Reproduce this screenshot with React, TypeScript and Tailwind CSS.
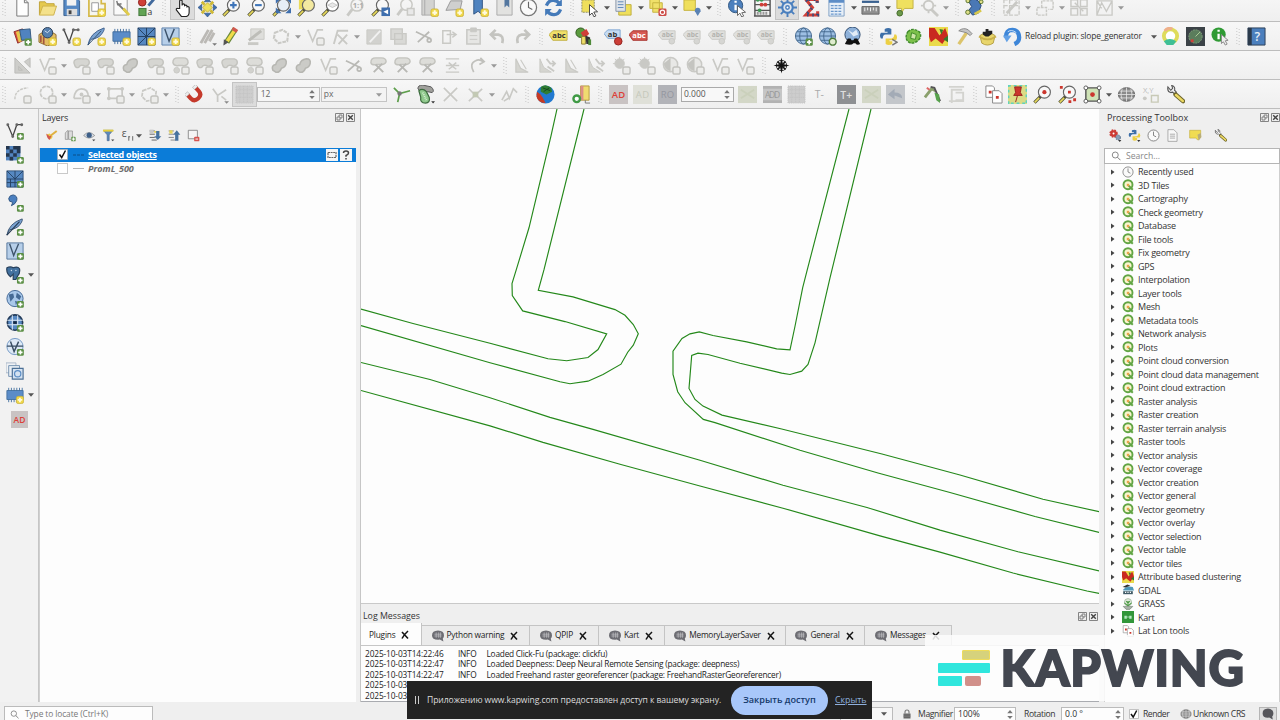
import React from "react";

/* ---------- shared marks ---------- */
const Star = () => (
  <g>
    <rect x="11.5" y="11.5" width="8" height="8" rx="2" fill="#f0d84a" stroke="#c9ae35" strokeWidth=".8" />
    <path d="M15.5 13v5M13 15.5h5" stroke="#fffbe0" strokeWidth="2" />
  </g>
);
const Plus = () => (
  <g>
    <rect x="12.2" y="12.2" width="7.6" height="7.6" rx="1.5" fill="#5b8f45" />
    <path d="M16 13.6v4.8M13.6 16h4.8" stroke="#fff" strokeWidth="1.8" />
  </g>
);
const GBadge = () => <rect x="11.5" y="11.5" width="7.5" height="7.5" rx="2" fill="#ececea" stroke="#c2c2be" strokeWidth="1.5" />;
const Lens = ({ fill = "#f8f8f8" }: { fill?: string }) => (
  <g>
    <path d="M8 12L1.5 18.5" stroke="#4b4b33" strokeWidth="3.4" />
    <path d="M6.5 13.500L1.800 18.200" stroke="#e6d85c" strokeWidth="1.8" />
    <circle cx="12" cy="7.500" r="6.300" fill={fill} stroke="#666" strokeWidth="1.200" />
  </g>
);
const GlobeBase = ({ fill = "#9dbfe3", line = "#46698f" }: { fill?: string; line?: string }) => (
  <g fill="none" stroke={line} strokeWidth="1">
    <circle cx="10" cy="9.500" r="8.500" fill={fill} />
    <ellipse cx="10" cy="9.500" rx="4" ry="8.500" />
    <path d="M1.500 9.500h17M3 5h14M3 14h14" />
  </g>
);
const G = "#c9c9c5";

const art: Record<string, React.ReactNode> = {
  file: <path d="M4 1h8l4 4v14H4zM12 1v4h4" fill="#fefefe" stroke="#777" strokeWidth="1" />,
  folder: <><path d="M1.500 18V4h6l1.500 2h8v3" fill="#e5c94f" stroke="#c0a238" /><path d="M1.500 18L5 8.500h14.500L16.500 18z" fill="#f4e18b" stroke="#cdb14a" /></>,
  save: <><path d="M2 1.500h15l1.500 1.500v15.500H2z" fill="#5689c4" stroke="#39608f" /><path d="M5 2h10v6H5z" fill="#f3f3f3" /><path d="M5 11.500h11v7H5z" fill="#ddd" /><path d="M7 13h3v4H7z" fill="#444" /></>,
  layout: <><path d="M2 1h13v5h4v8h-5v5H2z" fill="#f6f6ef" stroke="#d5b94a" strokeWidth="1.800" /><path d="M5 5h7v9H5z" fill="#fff" stroke="#999" /><Star /></>,
  manager: <><path d="M2 1h14v17H2z" fill="#fafafa" stroke="#999" /><path d="M6 6l10 10" stroke="#777" strokeWidth="2" /><path d="M12 11l6 7" stroke="#e0cb4b" strokeWidth="3" /><path d="M5 3l1 4 4-1" fill="none" stroke="#777" strokeWidth="1.500" /></>,
  style: <><circle cx="5.500" cy="4.500" r="4" fill="#cf3f38" stroke="#8d241f" /><path d="M12 8L18 1" stroke="#41699c" strokeWidth="3" /><rect x="2" y="11" width="7.500" height="7.500" fill="#62a455" stroke="#42783b" /><text x="11" y="17.500" fontSize="9" fontFamily="Open Sans" fill="#333">a</text></>,
  hand: <path d="M7 11V3q1.300-2 2.600 0v5 -1q1.500-1.500 2.600 0v1q1.500-1 2.500.3v1q1.500-.8 2.300.5v5q0 4-3 4.700H9Q7 17 3.500 12.500q-.3-2 1.500-1.500z" fill="#fff" stroke="#222" strokeWidth="1.200" />,
  pan: <><path d="M10 5l5 5-5 5-5-5z" fill="#efe05a" stroke="#c6b43d" /><path d="M10 0l3.500 4h-7zM10 20l3.500-4h-7zM0 10l4-3.500v7zM20 10l-4-3.500v7z" fill="#3f6fae" stroke="#2b4b78" strokeWidth=".6" /><path d="M4 4l3 3M16 4l-3 3M4 16l3-3M16 16l-3-3" stroke="#cfb936" strokeWidth="3" /></>,
  zin: <><Lens /><path d="M12 4v7M8.500 7.500h7" stroke="#3e74b8" strokeWidth="2.200" /></>,
  zout: <><Lens /><path d="M8.500 7.500h7" stroke="#3e74b8" strokeWidth="2.200" /></>,
  zfull: <><Lens fill="#e6eef7" /><path d="M4 0h6L4 6zM20 0h-6l6 6zM20 16h-6l6-6zM10 16L4 10v6z" fill="#3f6fae" /></>,
  zsel: <><path d="M2 1h9v11H2z" fill="#eadb5c" /><Lens fill="#f3e9a0" /></>,
  zlayer: <><Lens fill="#fff" /><path d="M7 7.500L12 5l5 2.500-5 2.500z" fill="#e8e8e8" stroke="#aaa" strokeWidth=".6" /></>,
  zlast: <><Lens /><path d="M11 10h9v9h-9z" fill="#3f6fae" /><path d="M18 12l-5 2.500 5 2.500z" fill="#fff" /></>,
  znext: <g stroke={G} fill="none" strokeWidth="1.600"><circle cx="11" cy="7" r="6" /><path d="M6.500 11.500L1.500 18" strokeWidth="3" /><path d="M12 11h7v7h-7z" fill="#e8e8e8" /></g>,
  z11: <g><g stroke={G} fill="none" strokeWidth="1.600"><circle cx="11.500" cy="7.500" r="6.300" /><path d="M6.500 12L1.500 18.500" strokeWidth="3" /></g><text x="7" y="10.500" fontSize="8" fontWeight="700" fontFamily="Open Sans" fill="#aaa">1:1</text></g>,
  newmap: <><path d="M2 1h13v17H2z" fill="#d3d3d1" stroke="#aaa" /><path d="M5 1v17" stroke="#aaa" /><Star /></>,
  new3d: <><path d="M1 13L6 3h12l-2 9z" fill="#cfcfcf" stroke="#999" /><Star /></>,
  bookmark: <><path d="M4 0h9v18L8.500 14 4 17z" fill="#4f83bf" stroke="#2f5484" /><Star /></>,
  bookmarks: <><path d="M2 1h16v17H2z" fill="#e2e2e0" stroke="#aaa" /><path d="M10 0h5v10l-2.500-2.500L10 10z" fill="#54779f" /></>,
  clock: <><circle cx="10" cy="10" r="8.500" fill="#fafafa" stroke="#777" strokeWidth="1.300" /><path d="M10 4v6l4 2" fill="none" stroke="#666" strokeWidth="1.200" /></>,
  refresh: <g fill="none" stroke="#447ab9" strokeWidth="3.400"><path d="M2.500 8Q5 2 10 2.500q4 .3 6 3" /><path d="M17.500 12Q15 18 10 17.500q-4-.3-6-3" /><path d="M18.800 1v7.500h-7zM1.200 19v-7.500h7z" fill="#447ab9" stroke="none" /></g>,
  select: <><path d="M2 2h13v13H2z" fill="#efdf5c" stroke="#8e8e6a" strokeDasharray="2 1" /><path d="M10 7l8.500 7.500-4 .3 2.200 4-2 1-2-4-2.700 2.500z" fill="#fff" stroke="#333" strokeWidth=".9" /></>,
  selval: <><path d="M5 7h13v11H5z" fill="#efdf5c" stroke="#bfae3d" /><path d="M2 1h10v13H2z" fill="#dfe4ea" stroke="#8795a5" /><path d="M4 4h6M4 7h6M4 10h6" stroke="#5f87b7" /></>,
  desel: <><path d="M2 1h10v10H2z M5 5h10v10H5z" fill="#f0e069" stroke="#c5b33f" /><rect x="11" y="11" width="8.500" height="8" rx="1.500" fill="#cc4b46" /><circle cx="15.200" cy="15" r="2.300" fill="none" stroke="#fff" strokeWidth="1.200" /></>,
  selloc: <><path d="M1 2h12v11H1z" fill="#efdf5c" stroke="#c5b33f" /><path d="M15.500 19l-3-5q-.3-3.500 3-3.700 3.300.2 3 3.700z" fill="#5a82b4" /></>,
  identify: <><circle cx="8" cy="8" r="7.500" fill="#4d80bd" stroke="#315781" /><path d="M8 3v2M8 7v6" stroke="#fff" strokeWidth="2.400" /><path d="M10 8l8.500 7-4 .5 2 3.500-2 1-2-4-2.500 2.500z" fill="#fff" stroke="#555" strokeWidth=".9" /></>,
  abacus: <><path d="M2 1v18M18 1v18M1 19h18M2 7h16M2 13h16M2 2h16" stroke="#555" strokeWidth="1.500" /><path d="M5 2h0M9 2h0M7 13h0" stroke="#3f9a55" strokeWidth="4" strokeLinecap="round" /><path d="M13 7h0M9 7h0" stroke="#cf3f38" strokeWidth="4" strokeLinecap="round" /><path d="M4 16h12" stroke="#999" strokeWidth="3" strokeDasharray="2 1" /></>,
  gear: <g stroke="#4a7fbe" fill="none"><path d="M10 0v20M0 10h20M3 3l14 14M17 3L3 17" strokeWidth="2" /><circle cx="10" cy="10" r="5.500" strokeWidth="2.200" fill="#dfe6ee" /><circle cx="10" cy="10" r="1.800" strokeWidth="1.500" fill="#fff" /></g>,
  sigma: <><path d="M16 5V1.500H4l7 8.500-7 8h12.500V14" fill="none" stroke="#cf3f38" strokeWidth="3.200" /><path d="M16 5V1.500H4l7 8.500-7 8h12.500V14" fill="none" stroke="#2f4d80" strokeWidth="3.200" strokeDasharray="1.500 4" /></>,
  table: <><path d="M2 1h16v18H2z" fill="#e7eff8" stroke="#7f9fc4" /><path d="M2 1h16v4H2z" fill="#5d8dc7" /><path d="M4 8h12M4 11h12M4 14h12M4 17h12" stroke="#6b98cc" strokeWidth="1.300" strokeDasharray="3 1" /></>,
  ruler: <><path d="M1 4h18" stroke="#39608f" strokeWidth="2.400" /><path d="M1 9h18v8H1z" fill="#8f8f8f" stroke="#666" /><path d="M4 10v4M7 10v3M10 10v4M13 10v3M16 10v4" stroke="#f4f4f4" /></>,
  tip: <><path d="M2 1h17v10h-9l-3 4v-4H2z" fill="#efe05f" stroke="#c2b144" /><circle cx="5" cy="16" r="3" fill="#6c9a4a" stroke="#476b30" /></>,
  gearg: <g stroke={G} fill="none"><circle cx="9" cy="8" r="5" strokeWidth="2" /><path d="M12 12l7 7" strokeWidth="3" /><path d="M9 0v16M1 8h16" strokeDasharray="3 10" strokeWidth="2" /></g>,
  nodes: <><path d="M4 4Q8-1 14 3l3 5-3 8-6 2-4-5 3-4z" fill="#4a78b5" stroke="#27487a" /><g fill="#dfe08a" stroke="#56702c"><circle cx="3" cy="3" r="2" /><circle cx="17" cy="4" r="2" /><circle cx="3" cy="15" r="2.300" /></g><path d="M10 17l7-4" stroke="#d8c84b" strokeWidth="2.500" /></>,
  gBox: <g stroke={G} fill="none" strokeWidth="1.400"><path d="M2 2h16v16H2zM2 8h16M8 2v16" strokeDasharray="4 1.500" /><path d="M5 16L16 4" strokeWidth="3" /></g>,
  gGrid: <g stroke={G} fill="none" strokeWidth="1.500"><path d="M1 10h10v8H1zM6 10V3h12v9h-5" strokeDasharray="3 1" /></g>,
  gHex: <g stroke={G} fill="none" strokeWidth="1.500"><path d="M1 2h7v7H1zM11 2h7v7h-7zM1 11h7v7H1zM11 11h7v7h-7z" /><path d="M5 5l9 9" /></g>,
  gTri: <g stroke={G} fill="none" strokeWidth="1.400"><path d="M2 3h16v15H2zM2 18L7 5l5 9 6-11M2 3l5 8" /></g>,
  /* row 2 */
  dsm: <><path d="M1 5l9-3 3 11-8 4z" fill="#d6473f" stroke="#90302a" /><path d="M3 5l10-2 2 10-9 3z" fill="#e6c64a" /><path d="M7 3l11-1 1 11-10 1z" fill="#5083bf" stroke="#34597f" /><Plus /></>,
  geopkg: <><path d="M1 8l9-5 9 5v8l-9 4-9-4z" fill="#e3bd63" stroke="#8e6f35" /><path d="M3 9v7M6 10v8" stroke="#a5563f" strokeWidth="1.800" /><circle cx="10" cy="6" r="5.500" fill="#557fae" stroke="#2b3e55" /><path d="M7 4l3 2 3-3" stroke="#d6e2ef" fill="none" /><Star /></>,
  vnew: <><path d="M2 3l5.500 13L12 3h5" fill="none" stroke="#444" strokeWidth="1.400" /><path d="M2 3h0M7.500 16h0M12 3h0M17 3h0" stroke="#666" strokeWidth="3.200" strokeLinecap="round" /><Star /></>,
  feather: <><path d="M1 19Q3 6 18 1q1 3-5 9-5 3-9 3z" fill="#7ba3d2" stroke="#3d5f8b" /><path d="M1 19L15 4" stroke="#34506f" /><Star /></>,
  featherp: <><path d="M1 19Q3 6 18 1q1 3-5 9-5 3-9 3z" fill="#7ba3d2" stroke="#34506f" /><path d="M1 19L15 4" stroke="#263a52" strokeWidth="1.300" /><Plus /></>,
  chip: <><path d="M1 5h18v10H1z" fill="#5b8cc8" stroke="#44709f" /><path d="M3 2v16M6 2v16M9 2v16M12 2v16M15 2v16M18 2v5" stroke="#44709f" strokeDasharray="3.500 9" /><Star /></>,
  mesh: <><path d="M1 1h18v18H1z" fill="#5688c2" stroke="#2f4f77" /><path d="M1 1l9 9 9-9M1 10h18M10 1v18M1 19l9-9" stroke="#243f60" fill="none" /><Star /></>,
  meshp: <><path d="M1 1h18v18H1z" fill="#5688c2" stroke="#2f4f77" /><path d="M1 1l9 9 9-9M1 10h18M10 1v18M1 14h18M5 10v9" stroke="#243f60" fill="none" /><Plus /></>,
  vtile: <><path d="M1 1h18v18H1z" fill="#b7cfe9" stroke="#5d81ab" /><path d="M4 2l4.500 13L14 2" fill="none" stroke="#3d536b" strokeWidth="1.500" /><Star /></>,
  vtilep: <><path d="M1 1h18v18H1z" fill="#b7cfe9" stroke="#4f7197" /><path d="M4 2l4.500 13L14 2" fill="none" stroke="#3d536b" strokeWidth="1.500" /><Plus /></>,
  gpencils: <><path d="M3 17L11 3M7 17l8-14M12 15l5-9" stroke="#bbb9b5" strokeWidth="3" /><path d="M15 17h5l-2.500 2.800z" fill="#777" /></>,
  pencil: <><path d="M5 16L14 2" stroke="#6a8a3b" strokeWidth="6" /><path d="M5.500 15L14 2.500" stroke="#f0dc4a" strokeWidth="3.500" /><path d="M12.500 4.500l2-3" stroke="#d0584e" strokeWidth="6" /><path d="M2 13l5 3-5.500 3.500z" fill="#555" /></>,
  gsave: <><path d="M4 2h14v11H4z" fill="#dededb" stroke={G} /><path d="M2 14L15 4" stroke="#bdbdb8" strokeWidth="3" /><path d="M1 16h11v3H1z" fill="#c9c9c5" /></>,
  gpoly: <path d="M3 6l8-3 6 4-1 8-9 2-5-5z" fill="none" stroke={G} strokeWidth="2.200" strokeDasharray="4 1" />,
  gv: <><path d="M2 3l5 12L12 3h6" fill="none" stroke={G} strokeWidth="1.700" /><GBadge /></>,
  gvx: <g stroke={G} fill="none" strokeWidth="2"><path d="M3 18L7 4h11M7 8l10 10M17 8L8 18" /></g>,
  gedit: <><path d="M2 3h15v15H2z" fill="#d2d2cf" stroke={G} /><path d="M5 16L16 4" stroke="#f1f1f1" strokeWidth="2" /></>,
  gcopy: <><path d="M2 2h12v11H2zM6 7h12v11H6z" fill="#d9d9d6" stroke={G} strokeWidth="1.400" /></>,
  gcut: <g stroke="#b9b9b5" fill="none" strokeWidth="1.800"><path d="M2 5l15 7M4 16L16 5" /><circle cx="16" cy="14" r="2" /></g>,
  gpaste: <g stroke={G} fill="none" strokeWidth="1.600"><path d="M4 4h8v13H4zM8 8h10M14 5l4 3-4 3" /></g>,
  gclip: <><path d="M3 3h14v15H3z" fill="#e6e6e4" stroke={G} strokeWidth="1.600" /><path d="M7 1h6v4H7zM6 9h8M6 13h8" stroke={G} fill={G} /></>,
  gundo: <path d="M3 8h8q6 1 4 9M8 3L3 8l5 5" fill="none" stroke="#c4c4c0" strokeWidth="2.800" />,
  gredo: <path d="M17 8H9q-6 1-4 9M12 3l5 5-5 5" fill="none" stroke="#c4c4c0" strokeWidth="2.800" />,
  abcY: <><path d="M0 8l4-4h15v10H4z" fill="#f0e069" stroke="#c2b144" /><text x="3.500" y="12" fontSize="8" fontWeight="700" fontFamily="Open Sans" fill="#333">abc</text></>,
  charts: <><circle cx="7" cy="6" r="5" fill="#5a9a3e" stroke="#30591f" /><path d="M7 6l6-4 3 5-5 5z" fill="#cf3f38" /><path d="M8 10h4v8H8z" fill="#f0e069" stroke="#8e7f35" /><path d="M12 9l5 2v7h-4z" fill="#333" /><path d="M15 13h3v6h-3z" fill="#4f8a3a" /></>,
  abcB: <><path d="M0 7l4-4h13v9H4z" fill="#c6dbf2" stroke="#7fa6d3" /><text x="4" y="11" fontSize="8" fontWeight="700" fontFamily="Open Sans" fill="#333">ab</text><circle cx="15" cy="15" r="4" fill="#cb3d36" stroke="#92241f" /></>,
  abcR: <><path d="M0 8l4-4h15v10H4z" fill="#d65a53" stroke="#a8332d" /><text x="3.500" y="12" fontSize="8" fontWeight="700" fontFamily="Open Sans" fill="#fff">abc</text></>,
  gabc: <><path d="M0 8l4-4h14v9H4z" fill="#e0e0dd" stroke={G} /><text x="4" y="11" fontSize="7" fontWeight="700" fontFamily="Open Sans" fill="#b2b2ae">abc</text><circle cx="14.500" cy="15" r="3" fill="#d6d6d3" stroke={G} /></>,
  globeadd: <><GlobeBase /><Plus /></>,
  globecog: <><GlobeBase /><circle cx="15.500" cy="15.500" r="3.600" fill="#dfeccf" stroke="#4b7a3a" strokeWidth="1.500" /></>,
  globebin: <><circle cx="10" cy="8" r="8" fill="#8fb2da" stroke="#2d4a6d" /><path d="M5 3l5 3 4-3 2 5-5 2z" fill="#e3ecf6" /><path d="M2 18l3-6h3l1 2h2l1-2h3l3 6q-3 2-5-1h-2q-2 3-9 1z" fill="#111" /></>,
  python: <><path d="M6 2q4-2 7 0v6H7q-3 0-3 4H2Q0 9 2 6h7V5H6z" fill="#3d6fa8" /><path d="M14 18q-4 2-7 0v-6h6q3 0 3-4h2q2 3 0 6h-7v1h3z" fill="#eccf44" /><path d="M14 13l5 3-5 3" fill="none" stroke="#777" strokeWidth="1.500" /></>,
  snake: <><path d="M4 5q5-5 12 0 3 4 0 8-6 6-11 3-5-4-1-11z" fill="#7cc04a" stroke="#3f8a2a" strokeWidth="1.500" strokeDasharray="3 1" /><path d="M8 6l5 2-1 5-5-1z" fill="#cfe6a8" stroke="#3f8a2a" /></>,
  cluster: <><path d="M0 0h20v20H0z" fill="#eadb4b" /><path d="M0 1h6l5 8 6-8 3 8-6 9-7-6-5 4-2-6z" fill="#c92a20" /><path d="M11 2l4 1-2 5zM15 13l5-4v7z" fill="#377a2a" /></>,
  hammer: <><path d="M5 18L14 5" stroke="#dcc46b" strokeWidth="3.500" /><path d="M5 4q5-4 10-1l4 4-2 2-4-3z" fill="#c4c4c4" stroke="#888" /></>,
  plugin: <><path d="M2 9q8-6 16 0l-2 8q-6 4-12 0z" fill="#e8d56b" stroke="#b49f45" /><path d="M1 10q9 6 18 0" fill="none" stroke="#c9b04a" strokeWidth="2" /><path d="M8 2h3v2h4v3l-4 3H8L5 8V5h3z" fill="#222" /></>,
  reload: <><path d="M3 11Q3 3 10 3q7 .5 7 8 0 5-5 7" fill="none" stroke="#3d86d8" strokeWidth="4.500" /><path d="M0 9h9l-5 7z" fill="#63a1e6" /><path d="M5 5q4-3 9 1" stroke="#cfe3f8" fill="none" /></>,
  donut: <><circle cx="10" cy="9.500" r="7" fill="#fff" stroke="#dedc5a" strokeWidth="4" /><path d="M4 4q3-4 8-2" stroke="#efb08a" strokeWidth="3" fill="none" /><path d="M3 15q6-5 13 0l-3 4H6z" fill="#3fbf95" /></>,
  radar: <><path d="M0 0h20v20H0z" fill="#3b4247" /><circle cx="10" cy="10" r="7" fill="#5b7d5c" stroke="#83a27e" strokeDasharray="2 1" /><path d="M10 10l5-5" stroke="#b0d09a" /><path d="M5 13h3v3H5z" fill="#cf3f38" /></>,
  info: <><circle cx="8" cy="8" r="7.500" fill="#2f9a34" /><path d="M8 3v2M8 7v6" stroke="#fff" strokeWidth="2.400" /><path d="M11 8l7 6-3 .5 2 3.500-2 1-2-3.500-2 2z" fill="#eee" stroke="#888" /></>,
  help: <><path d="M1 1h18v18H1z" fill="#4b7fbd" stroke="#2c3f56" /><path d="M1 1h4v18H1z" fill="#2b3a4c" /><text x="8" y="15" fontSize="13" fontFamily="Open Sans" fontWeight="600" fill="#e6eef7">?</text></>,
  /* row 3 */
  gsetsq: <path d="M2 2v16h16zM6 11v4h4zM18 2v10L12 6z" fill="#cdcdca" stroke="#bcbcb8" />,
  gpill: <><path d="M3 10q-3-6 3-7h9q4 1 3 5-2 4-6 2-4-1-5 2-3 1-4-2z" fill="#d6d6d2" stroke="#c3c3be" strokeWidth="1.500" /><GBadge /></>,
  gpill2: <><path d="M2 7q0-5 5-5h6q5 0 5 5-1 4-6 3H8q-5 1-6-3z" fill="#ddddd9" stroke="#c3c3be" strokeWidth="1.500" /><circle cx="6" cy="15" r="3" fill="#d2d2ce" stroke={G} /><GBadge /></>,
  gblob: <path d="M3 15q-2-5 3-6 1-5 7-6 5 0 4 5-1 4-5 5-2 5-6 4z" fill="#cbcbc7" stroke="#b6b6b1" strokeWidth="1.600" />,
  gscis: <><path d="M2 7q0-5 5-5h6q5 0 5 4-1 3-6 3H8q-5 1-6-2z" fill="#ddddd9" stroke="#c3c3be" strokeWidth="1.500" /><path d="M5 17L14 8M15 17L7 9" stroke="#b8b8b4" strokeWidth="2" /></>,
  gline: <g stroke={G} fill="none" strokeWidth="1.500"><path d="M3 3h14M3 17h14M6 7l4 3 4-3M6 14l4-3 4 3M3 10h14" /></g>,
  grot: <path d="M6 17Q1 8 8 5q4-2 8 1M13 2l4 4-5 3" fill="none" stroke="#c0c0bc" strokeWidth="1.800" />,
  gtriA: <path d="M3 17V3l5 10 8 4zM8 4l6 10" fill="#d5d5d0" stroke={G} strokeWidth="1.200" />,
  gtriB: <><path d="M2 17V3l4 9 8 5z" fill="#d5d5d0" stroke={G} /><path d="M9 3l4 5h5M15 5l3 3-3 3M10 11l7 5" stroke={G} strokeWidth="1.800" fill="none" /></>,
  gcirc: <><circle cx="8" cy="8" r="5" fill="#c9c9c5" stroke={G} /><path d="M8 1v3M1 8h3M3 3l2 2M13 3l-2 2" stroke={G} /><GBadge /></>,
  gpie: <><circle cx="9" cy="9" r="7.500" fill="#e8e8e6" stroke={G} strokeWidth="1.600" /><path d="M9 2v14q-7-2-7-8z" fill="#c4c4c0" /><GBadge /></>,
  compass: <g transform="translate(1.500 1.500) scale(.85)"><circle cx="10" cy="10" r="6.500" fill="none" stroke="#333" strokeWidth="1.200" /><path d="M10 0l1.800 8.200L20 10l-8.200 1.800L10 20l-1.800-8.200L0 10l8.200-1.800z" fill="#111" /><path d="M5 5l3 3M15 5l-3 3M5 15l3-3M15 15l-3-3" stroke="#111" strokeWidth="1.800" /></g>,
  /* row 4 */
  garc: <><path d="M2 15Q2 4 16 3" fill="none" stroke={G} strokeWidth="1.500" strokeDasharray="3 1" /><GBadge /></>,
  gcircle: <><circle cx="9" cy="8" r="6.500" fill="none" stroke={G} strokeWidth="1.800" strokeDasharray="4 1" /><GBadge /></>,
  gell: <><path d="M2 14Q3 4 10 4t7 8M2 14h8" fill="none" stroke={G} strokeWidth="1.800" /><circle cx="10" cy="10" r="2" fill={G} /><GBadge /></>,
  grect: <><path d="M3 4h14v10H3z" fill="none" stroke={G} strokeWidth="1.800" /><path d="M3 4h0M17 4h0M3 14h0" stroke={G} strokeWidth="4" strokeLinecap="round" /><GBadge /></>,
  gpolyb: <><path d="M3 6l8-3 6 4-1 8-9 2-5-5z" fill="none" stroke={G} strokeWidth="1.800" strokeDasharray="4 1" /><GBadge /></>,
  magnet: <g transform="translate(1.500 1.500) scale(.88) rotate(-42 10 10)"><path d="M3.500 4v6q0 6 6.500 6t6.500-6V4" fill="none" stroke="#c53a2c" strokeWidth="5" /><path d="M1 1.500h5v3.500H1zM14 1.500h5v3.500h-5z" fill="#ececec" stroke="#999" strokeWidth=".5" /></g>,
  gsnap: <><path d="M3 4l5 7 9-6M8 11v7M12 12l5 4" fill="none" stroke={G} strokeWidth="1.800" /><path d="M15 17h5l-2.500 2.800z" fill="#888" /></>,
  noise: <path d="M1 1h18v18H1zM1 5h18M1 9h18M1 13h18M5 1v18M9 1v18M13 1v18" fill="#cdcdcd" stroke="#c2c2c2" strokeDasharray="1 1" />,
  topo: <><path d="M2 3l6 6 11-3M8 9L6 18" fill="none" stroke="#5d9e4b" strokeWidth="1.800" /><circle cx="8" cy="9" r="2.300" fill="#777" /></>,
  shapes: <><path d="M2 4q0-4 5-4l9 2q4 4 1 6l-5-1-8-1z" fill="#a0a09c" stroke="#555" /><path d="M3 6q4-3 8 1l3 6q1 6-4 6-6 0-5-6z" fill="#8fc98c" stroke="#3d6c3f" strokeWidth="1.300" /><path d="M7 8l4 8" stroke="#d8f0d6" strokeDasharray="1 1" strokeWidth="2" /><path d="M16 17h4l-2 2.600z" fill="#333" /></>,
  gx: <path d="M3 3l14 14M17 3L3 17" stroke={G} strokeWidth="1.700" />,
  gx2: <><path d="M3 4l6 6M17 4L3 17M11 11l6 6" stroke={G} strokeWidth="1.700" /><path d="M7 7h6v6H7z" fill="#c3c9b4" /></>,
  gz: <path d="M2 16l5-9 3 7 4-10 4 4M4 17l5-3" stroke={G} strokeWidth="1.700" fill="none" />,
  earth: <><circle cx="10" cy="10" r="9.500" fill="#2279d0" /><path d="M1 7q4 2 7 8l2 4Q2 19 .5 12z" fill="#c73a25" /><path d="M5 2q5-4 11 1l1 4-6 3-6-3z" fill="#2f7d33" /><path d="M7 3l8 3M8 7l6-4" stroke="#144a20" /></>,
  dbadd: <><path d="M9 1h9v15H9z" fill="#f0dc70" stroke="#b49a3f" /><path d="M9 1h3v15H9z" fill="#dc8f86" /><path d="M14 16v3h5" stroke="#777" fill="none" /><circle cx="5" cy="14.500" r="3.500" fill="#fff" stroke="#3f9a45" strokeWidth="2.500" /></>,
  ad: <><path d="M0 0h20v20H0z" fill="#c9c3c3" /><text x="3" y="14" fontSize="10" fontFamily="Open Sans" fontWeight="600" fill="#dd4038" textLength="14">AD</text></>,
  gAD: <><path d="M0 0h20v20H0z" fill="#dfe0d8" /><text x="3" y="14" fontSize="10" fontFamily="Open Sans" fill="#c5c8bb" textLength="14">AD</text></>,
  gAO: <><path d="M0 0h20v20H0z" fill="#b2b3b8" /><text x="3" y="14" fontSize="10" fontFamily="Open Sans" fill="#9496a0" textLength="14">RO</text></>,
  gGreen: <><path d="M0 1h20v18H0z" fill="#d3d7c7" /><path d="M3 5l14 9M3 14l14-9" stroke="#cad0bb" strokeWidth="2" /></>,
  gADD: <><path d="M0 1h20v18H0z" fill="#c6c6c6" /><path d="M0 1h20v3H0zM0 16h20v3H0z" fill="#b2b2b2" /><text x="2" y="13.500" fontSize="9" fontFamily="Open Sans" fill="#999" textLength="16">ADD</text></>,
  gTm: <text x="3" y="14" fontSize="11" fontFamily="Open Sans" fill="#aaa">T-</text>,
  gTp: <><path d="M0 0h20v20H0z" fill="#8e9093" /><text x="3.500" y="14.500" fontSize="11" fontFamily="Open Sans" fontWeight="600" fill="#dedede">T+</text></>,
  gback: <><path d="M0 0h20v20H0z" fill="#c3c6ca" /><path d="M17 14q0-6-8-6V4L2 10l7 5v-4" fill="#a3abb6" /></>,
  tools: <><path d="M2 13l7-9 4 2" stroke="#8aa06c" strokeWidth="3" fill="none" /><path d="M8 2l4 1 6 14" stroke="#555" strokeWidth="2" fill="none" /><path d="M12 8l5 2 1 9-4-3z" fill="#57a34c" /><path d="M4 3l3 2" stroke="#d66" strokeWidth="2" /></>,
  gframe: <path d="M2 2h16M4 5h12M5 5v14M9 8h8v8H9M2 17h16" stroke="#d3d3cf" strokeWidth="2" fill="none" />,
  docs: <><path d="M2 1h7l2 2v10H2z" fill="#fff" stroke="#888" /><path d="M9 6h7l3 3v10H9z" fill="#fff" stroke="#888" /><path d="M5 6h3v3H5zM12.500 11.500h3v3h-3z" fill="#cb362d" /></>,
  pin: <><path d="M0 0h20v20H0z" fill="#dcdb85" /><path d="M0 0h20v20H0z" fill="none" stroke="#5fd3bd" strokeWidth="3" strokeDasharray="3 3" /><path d="M7 2h7l-1 6 2 3H6l2-3zM10 11l-2 7" fill="#cb362d" stroke="#9b241d" /></>,
  zred: <><Lens /><circle cx="12" cy="7.500" r="2.200" fill="#cb362d" /></>,
  zred2: <><Lens /><path d="M10.500 6h3v3h-3zM2 1h3v3H2zM11 16h3v3h-3zM16 14h3v3h-3z" fill="#cb362d" /></>,
  extent: <><path d="M3 3h14v14H3z" fill="#cfe3b6" stroke="#555" strokeWidth="1.500" /><g fill="#fff" stroke="#555"><circle cx="3" cy="3" r="2" /><circle cx="17" cy="3" r="2" /><circle cx="3" cy="17" r="2" /><circle cx="17" cy="17" r="2" /></g><circle cx="10" cy="10" r="2.500" fill="#cb362d" /></>,
  globeg: <g transform="translate(1 1) scale(.9)"><ellipse cx="10" cy="10" rx="9.500" ry="8" fill="#8a8a8a" stroke="#555" /><path d="M0 10h20M2 6h16M2 14h16M10 2v16M5 3q-3 7 0 14M15 3q3 7 0 14" stroke="#e9e9e9" strokeWidth=".9" fill="none" /></g>,
  gxy: <><text x="2" y="8" fontSize="8" fontFamily="Open Sans" fill="#bbb">X,Y</text><circle cx="4" cy="14" r="2" fill={G} /><path d="M11 11h7v7h-7z" fill="none" stroke="#c8c9b6" strokeWidth="1.500" /></>,
  wrench: <><path d="M2 2q-1 5 3 6l2-.500 2 2 2-2-2-2q1-4-3-5l1 3-2 2z" fill="#f0f0f0" stroke="#555" strokeWidth="1.100" /><path d="M10 10l8 7" stroke="#6d652d" strokeWidth="4.600" strokeLinecap="round" /><path d="M10.500 10.500l7.300 6.400" stroke="#ecd962" strokeWidth="2.600" strokeLinecap="round" /></>,
  /* left bar */
  vadd: <><path d="M2 3l5.500 13L12 3h5" fill="none" stroke="#444" strokeWidth="1.400" /><path d="M2 3h0M7.500 16h0M12 3h0M17.500 3h0" stroke="#666" strokeWidth="3.200" strokeLinecap="round" /><Plus /></>,
  raster: <><path d="M0 0h16v16H0z" fill="#5284c0" /><path d="M0 0h4v4H0zM8 0h8v4H8zM4 4h4v4H4zM0 8h4v4H0zM8 8h4v4H8zM12 4h4v4h-4zM4 12h4v4H4z" fill="#24364d" /><Plus /></>,
  comma: <><path d="M3 5q1-4 5-4 5 1 4 6-1 4-6 6 2-4 1-4Q3 9 3 5z" fill="#4a7fbf" stroke="#2e527f" /><Plus /></>,
  pg: <><path d="M1 2q4-2 7 0 5-2 7 1 1 5-2 8l-2 4H8V9L5 12Q0 8 1 2z" fill="#42719f" stroke="#263f5b" strokeWidth="1.300" /><path d="M6 5h0M11 5h0" stroke="#cfe0f0" strokeWidth="1.500" strokeLinecap="round" /><Plus /></>,
  world: <><circle cx="10" cy="9.500" r="9" fill="#a9c8ea" stroke="#3b6190" /><path d="M3 5l5-1 1 4-4 5zM12 3l5 4-2 4-4-3zM10 12l3 1-2 4z" fill="#456a95" /><Plus /></>,
  wcs: <><circle cx="10" cy="9.500" r="8.500" fill="#5688c2" stroke="#223a58" strokeWidth="1.800" /><path d="M1.500 7h17M1.500 12h17M7 1.500v16M13 1.500v16" stroke="#dbe7f4" strokeWidth="1.200" /><path d="M8 8h4v3H8z" fill="#16293f" /><Plus /></>,
  wfs: <><circle cx="10" cy="9.500" r="9" fill="#dde9f6" stroke="#6c93c2" /><path d="M5 4l4 11 5-11M1 9h18" fill="none" stroke="#394d63" strokeWidth="1.600" /><Plus /></>,
  virt: <><path d="M0 1h11v11H0z" fill="#f0f2f4" stroke="#a5b4c6" /><path d="M3 4h12v12H3z" fill="#e9eff5" stroke="#6e8cad" /><path d="M7 7h12v12H7z" fill="#d4e2f1" stroke="#4c7096" strokeWidth="1.300" /><circle cx="13" cy="13" r="3.500" fill="none" stroke="#5a8cc4" strokeWidth="1.300" /></>,
  /* panel tools */
  brush: <><path d="M2 9l7 7 3-4-5-5z" fill="#e8cf4a" /><path d="M2 7l5 4 4-2-4 8q-4-2-5-10z" fill="#d4594c" /><path d="M9 10l9-7" stroke="#e0b13f" strokeWidth="3" /></>,
  group: <><path d="M2 16V6l4-4v14zM7 16V3h6v13z" fill="#ddd" stroke="#888" /><rect x="11" y="12" width="7" height="7" rx="1.500" fill="#6b9c56" /><path d="M14.500 13v5M12 15.500h5" stroke="#fff" strokeWidth="1.500" /></>,
  eye: <><path d="M1 10q8-9 17 0-9 8-17 0z" fill="#dde3ea" stroke="#777" /><circle cx="9.500" cy="9.500" r="4" fill="#3e5f88" /><path d="M14 16h5l-2.500 3z" fill="#444" /></>,
  filter: <><path d="M2 2h15L11 9v9H8V9z" fill="#5d88bb" stroke="#42658e" /><path d="M1.500 1h16v3h-16z" fill="#e8cf3a" /><path d="M14 16h5l-2.500 3z" fill="#444" /></>,
  eps: <><text x="1" y="12.500" fontSize="16" fontFamily="Open Sans" fill="#555">ε</text><path d="M12 11v7M12 12h2M18 11v7" stroke="#666" strokeWidth="1.500" /></>,
  expand: <><path d="M1 3h8M1 8h8M1 13h8M4 17h8" stroke="#666" strokeWidth="1.500" /><path d="M1 1h6v6H1z" fill="#c7c7c7" /><path d="M8 3h8v3H8z" fill="#e6d45c" /><path d="M11 3h5v8h3l-5.500 6L8 11h3z" fill="#47729f" /></>,
  collapse: <><path d="M1 3h8M1 8h8M1 13h8M4 17h8" stroke="#888" strokeWidth="1.500" /><path d="M2 2h5v5H2z" fill="#e6d45c" /><path d="M11 18h5v-9h3L13.500 2 8 9h3z" fill="#47729f" /></>,
  remove: <><path d="M2 2h14v13H2z" fill="#f5f5f5" stroke="#777" strokeWidth="1.200" /><rect x="11" y="12" width="8" height="7" rx="1.500" fill="#d6544f" /><path d="M13 15.500h4" stroke="#fff" strokeWidth="1.500" /></>,
  gears: <><circle cx="7" cy="7" r="5" fill="#cc3b35" stroke="#cc3b35" strokeWidth="3" strokeDasharray="2.500 1.500" /><circle cx="7" cy="7" r="1.500" fill="#fff" /><circle cx="14" cy="13" r="3.500" fill="#8ba0b8" stroke="#71869f" strokeDasharray="2 1" strokeWidth="2" /><path d="M14 17h5l-2.500 3z" fill="#333" /></>,
  py2: <><path d="M6 2q4-2 7 0v6H7q-3 0-3 4H2Q0 9 2 6h7V5H6z" fill="#3d6fa8" /><path d="M14 17q-4 2-7 0v-6h6q3 0 3-4h2q2 3 0 6h-7v1h3z" fill="#eccf44" /><path d="M14 17h5l-2.500 3z" fill="#333" /></>,
  doc: <><path d="M3 1h9l5 5v13H3z" fill="#f8f8f8" stroke="#888" /><path d="M6 8h8M6 11h8M6 14h8" stroke="#888" /></>,
  note: <><path d="M1 2h17v11l-4 4-4-3H1z" fill="#f0dc52" stroke="#c4ae3f" /><path d="M13 9l5-3 1 6-4 6z" fill="#b7ad7c" /></>,
  q: <><circle cx="10" cy="9.500" r="7.500" fill="#f9f6cf" stroke="#62a544" strokeWidth="3.200" /><path d="M11 11l7 7" fill="none" stroke="#62a544" strokeWidth="3.400" /><path d="M8 8h4v4H8z" fill="#e9a34a" /></>,
  gdal: <><path d="M2 9Q8 2 18 5l2 6H2z" fill="#4f98b8" /><path d="M1 5l8-4 5 2-8 3z" fill="#333" /><path d="M2 12h16v5H2z" fill="#3f5a66" /><path d="M5 14h2M9 14h2M13 14h2" stroke="#fff" strokeWidth="2" /></>,
  grass: <><circle cx="10" cy="7" r="6" fill="#e0eadb" stroke="#8aa58a" /><path d="M10 14V5M10 13L4 8M10 13l6-5M7 5l3 4 3-4" stroke="#4e9b47" strokeWidth="1.700" fill="none" /><path d="M2 14h16l-5 5H7z" fill="#a8b3a8" stroke="#6d7a6d" /></>,
  kart: <><path d="M0 0h20v20H0z" fill="#32963a" /><path d="M4 8h4v5H4zM12 8h4v5h-4z" fill="#b7e8c4" /><path d="M8 10h4" stroke="#d8f4de" /></>,
  bubble: <><path d="M10 1q10 .5 10 8 0 3-2 5l1 5-6-3Q0 17 0 9q0-7.500 10-8z" fill="#6d6d73" /><path d="M4 7h12M4 10h12M7 4v9M11 4v9M14 4v9" stroke="#c9c9cd" strokeWidth="1" /></>,
  cross: <path d="M4 17Q8 9 16 2M4 4l12 13" fill="none" stroke="#151515" strokeWidth="3.200" />,
  bubbleg: <path d="M10 1q9 .5 9 8 0 3-2 5l1 5-6-3Q1 17 1 9q0-7.500 9-8z" fill="#56565b" />,
  lock: <><path d="M6 9V6q0-4 4-4t4 4v3" fill="none" stroke="#777" strokeWidth="2.200" /><path d="M3 9h14v10H3z" fill="#666" /><path d="M3 12h14M3 15h14" stroke="#858585" /></>,
  search: <><circle cx="8.500" cy="8" r="6" fill="none" stroke="#6d6d6d" strokeWidth="1.600" /><path d="M13 12.500l6 6" stroke="#6d6d6d" strokeWidth="1.800" /></>,
};

const Ico = ({ n, className = "size-[19px]" }: { n: string; className?: string }) => (
  <svg viewBox="0 0 20 20" className={`${className} shrink-0`}>{art[n]}</svg>
);

const Handle = () => (
  <div className="flex w-[11.500px] shrink-0 justify-center">
    <svg viewBox="0 0 4 18" className="h-[18px] w-[4px]">
      <path d="M.8 0v18M3.200 1v17" stroke="#c9c9c9" strokeWidth="1" strokeDasharray="1 2" />
    </svg>
  </div>
);
const Caret = ({ dark = true }: { dark?: boolean }) => (
  <div className="flex w-[9.300px] shrink-0 justify-center">
    <svg viewBox="0 0 6 4" className="h-[4px] w-[6px]"><path d="M0 .3h6L3 3.700z" fill={dark ? "#555" : "#999"} /></svg>
  </div>
);
const Cell = ({ n, on }: { n: string; on?: boolean }) => (
  <div className={`flex h-[25px] w-[24.750px] shrink-0 items-center justify-center ${on ? "border border-[#c4c4c4] bg-[#dcdcdc]" : ""}`}>
    <Ico n={n} />
  </div>
);
const Spin = () => (
  <svg viewBox="0 0 8 12" className="h-[11px] w-[8px] shrink-0"><path d="M1 4.500L4 1l3 3.500zM1 7.500L4 11l3-3.500z" fill="#777" /></svg>
);

/* Tokens: "|" grip, "v" active caret, "-" dim caret, "_" small gap, "*name" pressed. */
const Tokens = ({ list }: { list: string }) => (
  <>
    {list.split(" ").map((t, i) =>
      t === "|" ? <Handle key={i} />
      : t === "v" ? <Caret key={i} />
      : t === "-" ? <Caret key={i} dark={false} />
      : t === "_" ? <div key={i} className="w-[5px] shrink-0" />
      : t[0] === "*" ? <Cell key={i} n={t.slice(1)} on />
      : <Cell key={i} n={t} />
    )}
  </>
);

const Bar = ({ children }: { children: React.ReactNode }) => (
  <div className="flex h-[29px] shrink-0 items-center border-b border-[#bdbdbd] bg-linear-to-b from-[#f7f7f7] to-[#efefef]">
    <div className="-ml-[1.500px] flex shrink-0 items-center pt-px">{children}</div>
  </div>
);

const PanelButtons = () => (
  <div className="flex gap-[2px]">
    <svg viewBox="0 0 9 9" className="size-[9px]"><path d="M.5.5h8v8h-8zM2 4h3v3H2zM4 4V2h3v3H5" fill="none" stroke="#777" strokeWidth=".9" /></svg>
    <svg viewBox="0 0 9 9" className="size-[9px]"><path d="M.5.5h8v8h-8z" fill="none" stroke="#777" strokeWidth=".9" /><path d="M2.200 2.200l4.600 4.600M6.800 2.200L2.200 6.800" stroke="#444" strokeWidth="1.400" /></svg>
  </div>
);

const tree: [string, string][] = [
  ["Recently used", "clock"],
  ...["3D Tiles", "Cartography", "Check geometry", "Database", "File tools", "Fix geometry", "GPS", "Interpolation", "Layer tools", "Mesh", "Metadata tools", "Network analysis", "Plots", "Point cloud conversion", "Point cloud data management", "Point cloud extraction", "Raster analysis", "Raster creation", "Raster terrain analysis", "Raster tools", "Vector analysis", "Vector coverage", "Vector creation", "Vector general", "Vector geometry", "Vector overlay", "Vector selection", "Vector table", "Vector tiles"].map((s): [string, string] => [s, "q"]),
  ["Attribute based clustering", "cluster"],
  ["GDAL", "gdal"],
  ["GRASS", "grass"],
  ["Kart", "kart"],
  ["Lat Lon tools", "docs"],
];

const tabs: [string, string][] = [
  ["Python warning", "w-[108px]"],
  ["QPIP", "w-[69px]"],
  ["Kart", "w-[66px]"],
  ["MemoryLayerSaver", "w-[121px]"],
  ["General", "w-[79px]"],
  ["Messages", "w-[87px]"],
];

const logs: [string, string, string][] = [
  ["2025-10-03T14:22:46", "INFO", "Loaded Click-Fu (package: clickfu)"],
  ["2025-10-03T14:22:47", "INFO", "Loaded Deepness: Deep Neural Remote Sensing (package: deepness)"],
  ["2025-10-03T14:22:47", "INFO", "Loaded Freehand raster georeferencer (package: FreehandRasterGeoreferencer)"],
  ["2025-10-03", "", ""],
  ["2025-10-03", "", ""],
];

const leftTools = ["vadd", "raster", "meshp", "comma", "featherp", "vtilep", "pg", "world", "wcs", "wfs", "virt", "chip"];

const lines = [
  "557,109 551,136 529,228 516.300,270 512,284 512.300,296 522.700,311.300 565,322 606.700,334.300 598,350 588,358 566.700,361.300 548,359.300 490,343.700 413,324 361,309.500",
  "584,109 544,270 538.300,290.700 573,297.300 615,310 625,315.700 633.300,325 638.300,334.300 633.300,345.700 627.700,352.700 621,364.700 603,375 588,381.700 570,384.300 560,382.300 490,363.300 361,326",
  "849,109 807.300,270 802.700,288 795,326.700 790,350.300 776.700,349.300 746.700,342.300 713,336 699.300,332.300 690,334.300 682,339 673,351.700 673,375 677.700,392.300 685,403.300 703.300,420 715,423.300 800,451 878,473.700 950,493.300 1035,517.300 1100,533.500",
  "871,109 830,278.300 815,343.300 808,365 801.700,371.700 790,375 781.700,373.700 740,363.700 708,355 698,353.700 691.700,356 689,389 695,400 703,406.700 722,415.700 781.700,429.700 882,454.700 960,475.700 1043,500 1100,512.700",
  "361,363 430,380 490,398.300 550,418 593,430 700,461 783,486 867,508.300 940,531 1018,552.700 1100,572",
  "361,391 490,426.500 543,443 620,465 700,486.700 783,509 880,536.700 940,553 1013,574 1087,592 1100,594.500",
];

export default function App() {
  return (
    <div className="relative flex h-[720px] w-[1280px] flex-col overflow-hidden bg-[#efefef] font-['Open_Sans',sans-serif] text-[9px] leading-none text-[#333]">
      {/* toolbars */}
      <div className="flex h-[109px] shrink-0 flex-col justify-end overflow-hidden">
        <Bar>
          <Tokens list="| file folder save layout manager style | *hand pan zin zout zfull zsel zlayer z11 zlast znext newmap new3d bookmark bookmarks clock refresh | select v selval v desel v selloc v | identify abacus *gear sigma table v ruler v tip gearg - | nodes | gBox - gGrid - gHex gTri -" />
        </Bar>
        <Bar>
          <Tokens list="| dsm geopkg vnew feather chip mesh vtile | gpencils pencil gsave gpoly - gv gvx - gedit gcopy gcut gpaste gclip gundo gredo | abcY charts _ abcB abcR _ gabc gabc gabc gabc gabc | globeadd globecog globebin | python snake cluster hammer plugin reload" />
          <span className="w-[119px] shrink-0 whitespace-nowrap text-[8.500px] tracking-[-0.200px]">Reload plugin: slope_generator</span>
          <Tokens list="_ v donut radar info | help" />
        </Bar>
        <Bar>
          <Tokens list="| gsetsq gv - gpill gpill gblob gpill gpill2 gpill gpill gpill2 gblob gblob gv gcut gscis gscis gscis gline grot - | gtriA gtriB gtriA gtriB gcirc gcirc gpie gpie gv gv | compass" />
        </Bar>
        <Bar>
          <Tokens list="| garc gcircle - gell - grect - gpolyb - | magnet gsnap *noise" />
          <div className="flex h-[15px] w-[63px] shrink-0 items-center justify-between border border-[#bbb] bg-[#f6f6f6] px-[3px] text-[8.500px] text-[#666]"><span>12</span><Spin /></div>
          <div className="mr-[2px] ml-[1px] flex h-[15px] w-[66px] shrink-0 items-center justify-between border border-[#c4c4c4] bg-[#f3f3f3] px-[2px] text-[8.500px] text-[#666]"><span>px</span><Caret dark={false} /></div>
          <Tokens list="topo shapes gx gx2 - gz | earth | dbadd | ad gAD gAO" />
          <div className="mr-[1px] ml-px flex h-[15px] w-[53px] shrink-0 items-center justify-between border border-[#aaa] bg-[#f8f8f8] px-[2px] text-[8.500px] text-[#555]"><span>0.000</span><Spin /></div>
          <Tokens list="gGreen gADD noise gTm gTp gGreen gback | tools gframe | docs pin zred zred2 extent v globeg gxy wrench" />
        </Bar>
      </div>

      <div className="flex h-[593px] shrink-0">
        {/* data source bar */}
        <div className="flex w-[39px] shrink-0 flex-col border-r border-[#c6c6c6] bg-[#f2f2f2] pt-[10px]">
          {leftTools.map((n) => (
            <div key={n} className="flex h-[24px] items-center pl-[6px]">
              <Ico n={n} className="size-[18px]" />
              {(n === "pg" || n === "chip") && <div className="ml-[2px]"><Caret /></div>}
            </div>
          ))}
          <div className="flex h-[24px] items-center pl-[11px]"><Ico n="ad" className="size-[17px]" /></div>
        </div>

        {/* layers */}
        <div className="flex w-[317px] shrink-0 flex-col">
          <div className="flex h-[17px] items-center justify-between pr-[1px] pl-[3px] tracking-[-0.200px]"><span>Layers</span><PanelButtons /></div>
          <div className="flex h-[22px] items-center gap-[6px] pb-[3px] pl-[6px]">
            {["brush", "group", "eye", "filter", "eps"].map((n) => <Ico key={n} n={n} className="size-[13px]" />)}
            <div className="-mx-[6px]"><Caret /></div>
            <div className="flex gap-[6px] pl-[6px]">{["expand", "collapse", "remove"].map((n) => <Ico key={n} n={n} className="size-[13px]" />)}</div>
          </div>
          <div className="flex-1 border-l border-[#d0d0d0] bg-[#fdfdfd]">
            <div className="flex h-[13.500px] items-center bg-[#0b7cd8] pr-[6px] pl-[17px]">
              <svg viewBox="0 0 11 11" className="size-[11px]"><path d="M.5.500h10v10H.5z" fill="#fff" stroke="#aaa" strokeWidth=".7" /><path d="M2.500 5.500l2.200 3 3.800-7" fill="none" stroke="#111" strokeWidth="1.500" /></svg>
              <svg viewBox="0 0 12 2" className="ml-[5px] h-[2px] w-[12px]"><path d="M0 1h12" stroke="#0c4f88" strokeDasharray="3 1" /></svg>
              <span className="ml-[3px] flex-1 font-bold text-white underline decoration-1 underline-offset-1 tracking-[-0.240px]">Selected objects</span>
              <svg viewBox="0 0 26 12" className="-mr-[2px] h-[12px] w-[26px]"><path d="M0 0h12v12H0zM14 0h12v12H14z" fill="#f4f4f4" /><path d="M2 3.500h8v5H2z" fill="none" stroke="#666" strokeWidth="1.200" strokeDasharray="2 .6" /><path d="M17.500 4q0-2 2.500-2t2.500 2q0 1.500-2.500 2.500v1.200M20 9v1.500" fill="none" stroke="#444" strokeWidth="1.500" /></svg>
            </div>
            <div className="flex h-[13px] items-center pl-[17px]">
              <div className="size-[11px] border border-[#c9c9c9] bg-white" />
              <div className="ml-[5px] h-px w-[11px] bg-[#b5b5b5]" />
              <span className="ml-[4px] font-bold text-[#6c6c6c] italic">PromL_500</span>
            </div>
          </div>
        </div>

        {/* map and log */}
        <div className="ml-[4px] flex w-[739px] shrink-0 flex-col border-l border-[#c6c6c6]">
          <svg viewBox="361 109 738 495" className="h-[495px] w-[738px] shrink-0 border-b border-[#c9c9c9] bg-[#fdfdfd]" preserveAspectRatio="none">
            {lines.map((p, i) => <polyline key={i} points={p} fill="none" stroke="#24881a" strokeWidth="1.150" />)}
          </svg>
          <div className="flex h-[20px] shrink-0 items-center justify-between pt-[5px] pr-[1px] pl-[2px]"><span className="text-[8.800px]">Log Messages</span><PanelButtons /></div>
          <div className="flex h-[22px] shrink-0 items-end border-b border-[#c6c6c6] text-[8.300px] tracking-[-0.200px] text-[#222]">
            <div className="flex h-[22px] w-[61px] shrink-0 items-center gap-[5px] border-r border-[#c4c4c4] bg-[#fdfdfd] pt-[2px] pl-[8px]"><span>Plugins</span><Ico n="cross" className="size-[10px]" /></div>
            {tabs.map(([t, w]) => (
              <div key={t} className={`${w} flex h-[20px] shrink-0 items-center justify-center gap-[3px] border-t border-r border-[#c4c4c4] bg-[#ebebeb]`}>
                <Ico n="bubble" className="size-[12px]" />
                <span className="whitespace-nowrap">{t}</span>
                <Ico n="cross" className="ml-[2px] size-[10px]" />
              </div>
            ))}
          </div>
          <div className="flex-1 border-b border-[#a9abb0] bg-[#fdfdfd] pt-[2.500px] text-[8.300px] tracking-[-0.220px] text-[#222]">
            {logs.map(([d, l, m], i) => (
              <div key={i} className="flex h-[10.500px] items-center pl-[4px] whitespace-nowrap">
                <span className="w-[93px] tracking-[-0.110px]">{d}</span><span className="w-[28.500px]">{l}</span><span>{m}</span>
              </div>
            ))}
          </div>
        </div>

        {/* toolbox */}
        <div className="ml-[5px] flex w-[176px] shrink-0 flex-col">
          <div className="flex h-[17px] items-center justify-between pl-[3px]"><span>Processing Toolbox</span><PanelButtons /></div>
          <div className="flex h-[22px] items-center gap-[6px] pb-[3px] pl-[5px]">
            {["gears", "py2", "clock", "doc"].map((n) => <Ico key={n} n={n} className="size-[13px]" />)}
            <Ico n="note" className="ml-[4px] size-[13px]" />
            <Ico n="wrench" className="ml-[6px] size-[13px]" />
          </div>
          <div className="flex h-[16px] items-center gap-[5px] border border-[#b5b5b5] bg-white pl-[6px] text-[8.600px] text-[#888]"><Ico n="search" className="size-[10px]" />Search...</div>
          <div className="flex-1 border-x border-[#cfcfcf] bg-[#fdfdfd] pt-[1px]">
            {tree.map(([t, n]) => (
              <div key={t} className="flex h-[13.500px] items-center pl-[6px] whitespace-nowrap">
                <svg viewBox="0 0 4 6" className="h-[6px] w-[3.500px]"><path d="M0 0l4 3-4 3z" fill="#444" /></svg>
                <Ico n={n} className="ml-[7px] size-[12px]" />
                <span className="ml-[4.500px] tracking-[-0.210px]">{t}</span>
              </div>
            ))}
          </div>
        </div>
      </div>

      {/* status bar */}
      <div className="flex h-[18px] shrink-0 items-center pt-[6px] pl-[4px] text-[8.600px]">
        <div className="flex h-[16px] w-[149px] shrink-0 items-center gap-[6px] border border-[#bbb] bg-[#fdfdfd] pl-[5px] text-[8.400px] tracking-[-0.100px] text-[#777]"><Ico n="search" className="size-[9px]" />Type to locate (Ctrl+K)</div>
        <div className="ml-[687px] flex h-[14px] w-[53px] shrink-0 items-center justify-end border border-[#bbb] bg-[#f7f7f7] pr-[3px]"><Caret /></div>
        <Ico n="lock" className="ml-[9px] size-[10px]" />
        <span className="ml-[6px] w-[36px] tracking-[-0.350px]">Magnifier</span>
        <div className="flex h-[14px] w-[62px] shrink-0 items-center justify-between border border-[#bbb] bg-[#fdfdfd] pr-px pl-[3px]"><span>100%</span><Spin /></div>
        <span className="ml-[8px] w-[37px] tracking-[-0.350px]">Rotation</span>
        <div className="flex h-[14px] w-[63px] shrink-0 items-center justify-between border border-[#bbb] bg-[#fdfdfd] pr-px pl-[3px]"><span>0.0 °</span><Spin /></div>
        <svg viewBox="0 0 10 10" className="ml-[5px] size-[10px] shrink-0"><path d="M.5.500h9v9h-9z" fill="#fff" stroke="#aaa" strokeWidth=".7" /><path d="M2 5l2.200 3 3.500-6.500" fill="none" stroke="#111" strokeWidth="1.500" /></svg>
        <span className="ml-[4px] w-[37px] tracking-[-0.450px]">Render</span>
        <Ico n="globeg" className="size-[12px]" />
        <span className="ml-[1px] w-[66px] whitespace-nowrap tracking-[-0.350px]">Unknown CRS</span>
        <div className="flex h-[15px] w-[18px] shrink-0 items-center justify-center border border-[#b5b5b5] bg-[#dedede]"><Ico n="bubbleg" className="size-[12px]" /></div>
      </div>

      {/* watermark */}
      <div className="absolute top-[635px] left-[925px] flex h-[66px] w-[337px] items-start bg-[#fdfdfd]/85 pt-[15px] pl-[13px]">
        <div className="flex w-[52px] flex-col gap-[3px]">
          <div className="ml-[24px] h-[10px] w-[28px] rounded-[1px] border border-[#efdc5a] bg-[#d6d27c]" />
          <div className="h-[10px] rounded-[1px] bg-[#30e6dd]" />
          <div className="flex gap-[3px]"><div className="h-[10px] w-[24px] rounded-[1px] bg-[#30e6dd]" /><div className="h-[10px] w-[16px] rounded-[2px] bg-[#d1908a]" /></div>
        </div>
        <span className="ml-[10.500px] -mt-[8px] font-['Lato',sans-serif] text-[49px] leading-[50px] font-black tracking-[0.700px] text-[#434750] [-webkit-text-stroke:1.800px_#434750]">KAPWING</span>
      </div>

      {/* screen sharing notice */}
      <div className="absolute top-[681px] left-[407px] flex h-[38px] w-[465px] items-center bg-[#232323] pl-[8px] text-[8.800px] whitespace-nowrap text-[#dcdcdc]">
        <div className="flex gap-[2px]"><div className="h-[8px] w-px bg-[#ccc]" /><div className="h-[8px] w-px bg-[#ccc]" /></div>
        <span className="ml-[8px] w-[304px] shrink-0 text-[8.600px] tracking-[-0.080px]">Приложению www.kapwing.com предоставлен доступ к вашему экрану.</span>
        <div className="flex h-[29px] w-[97px] shrink-0 items-center justify-center rounded-full bg-[#a8c7fa] text-[9.100px] font-semibold text-[#14396b]">Закрыть доступ</div>
        <span className="ml-[7px] text-[#8fb0dc] underline">Скрыть</span>
      </div>
    </div>
  );
}
